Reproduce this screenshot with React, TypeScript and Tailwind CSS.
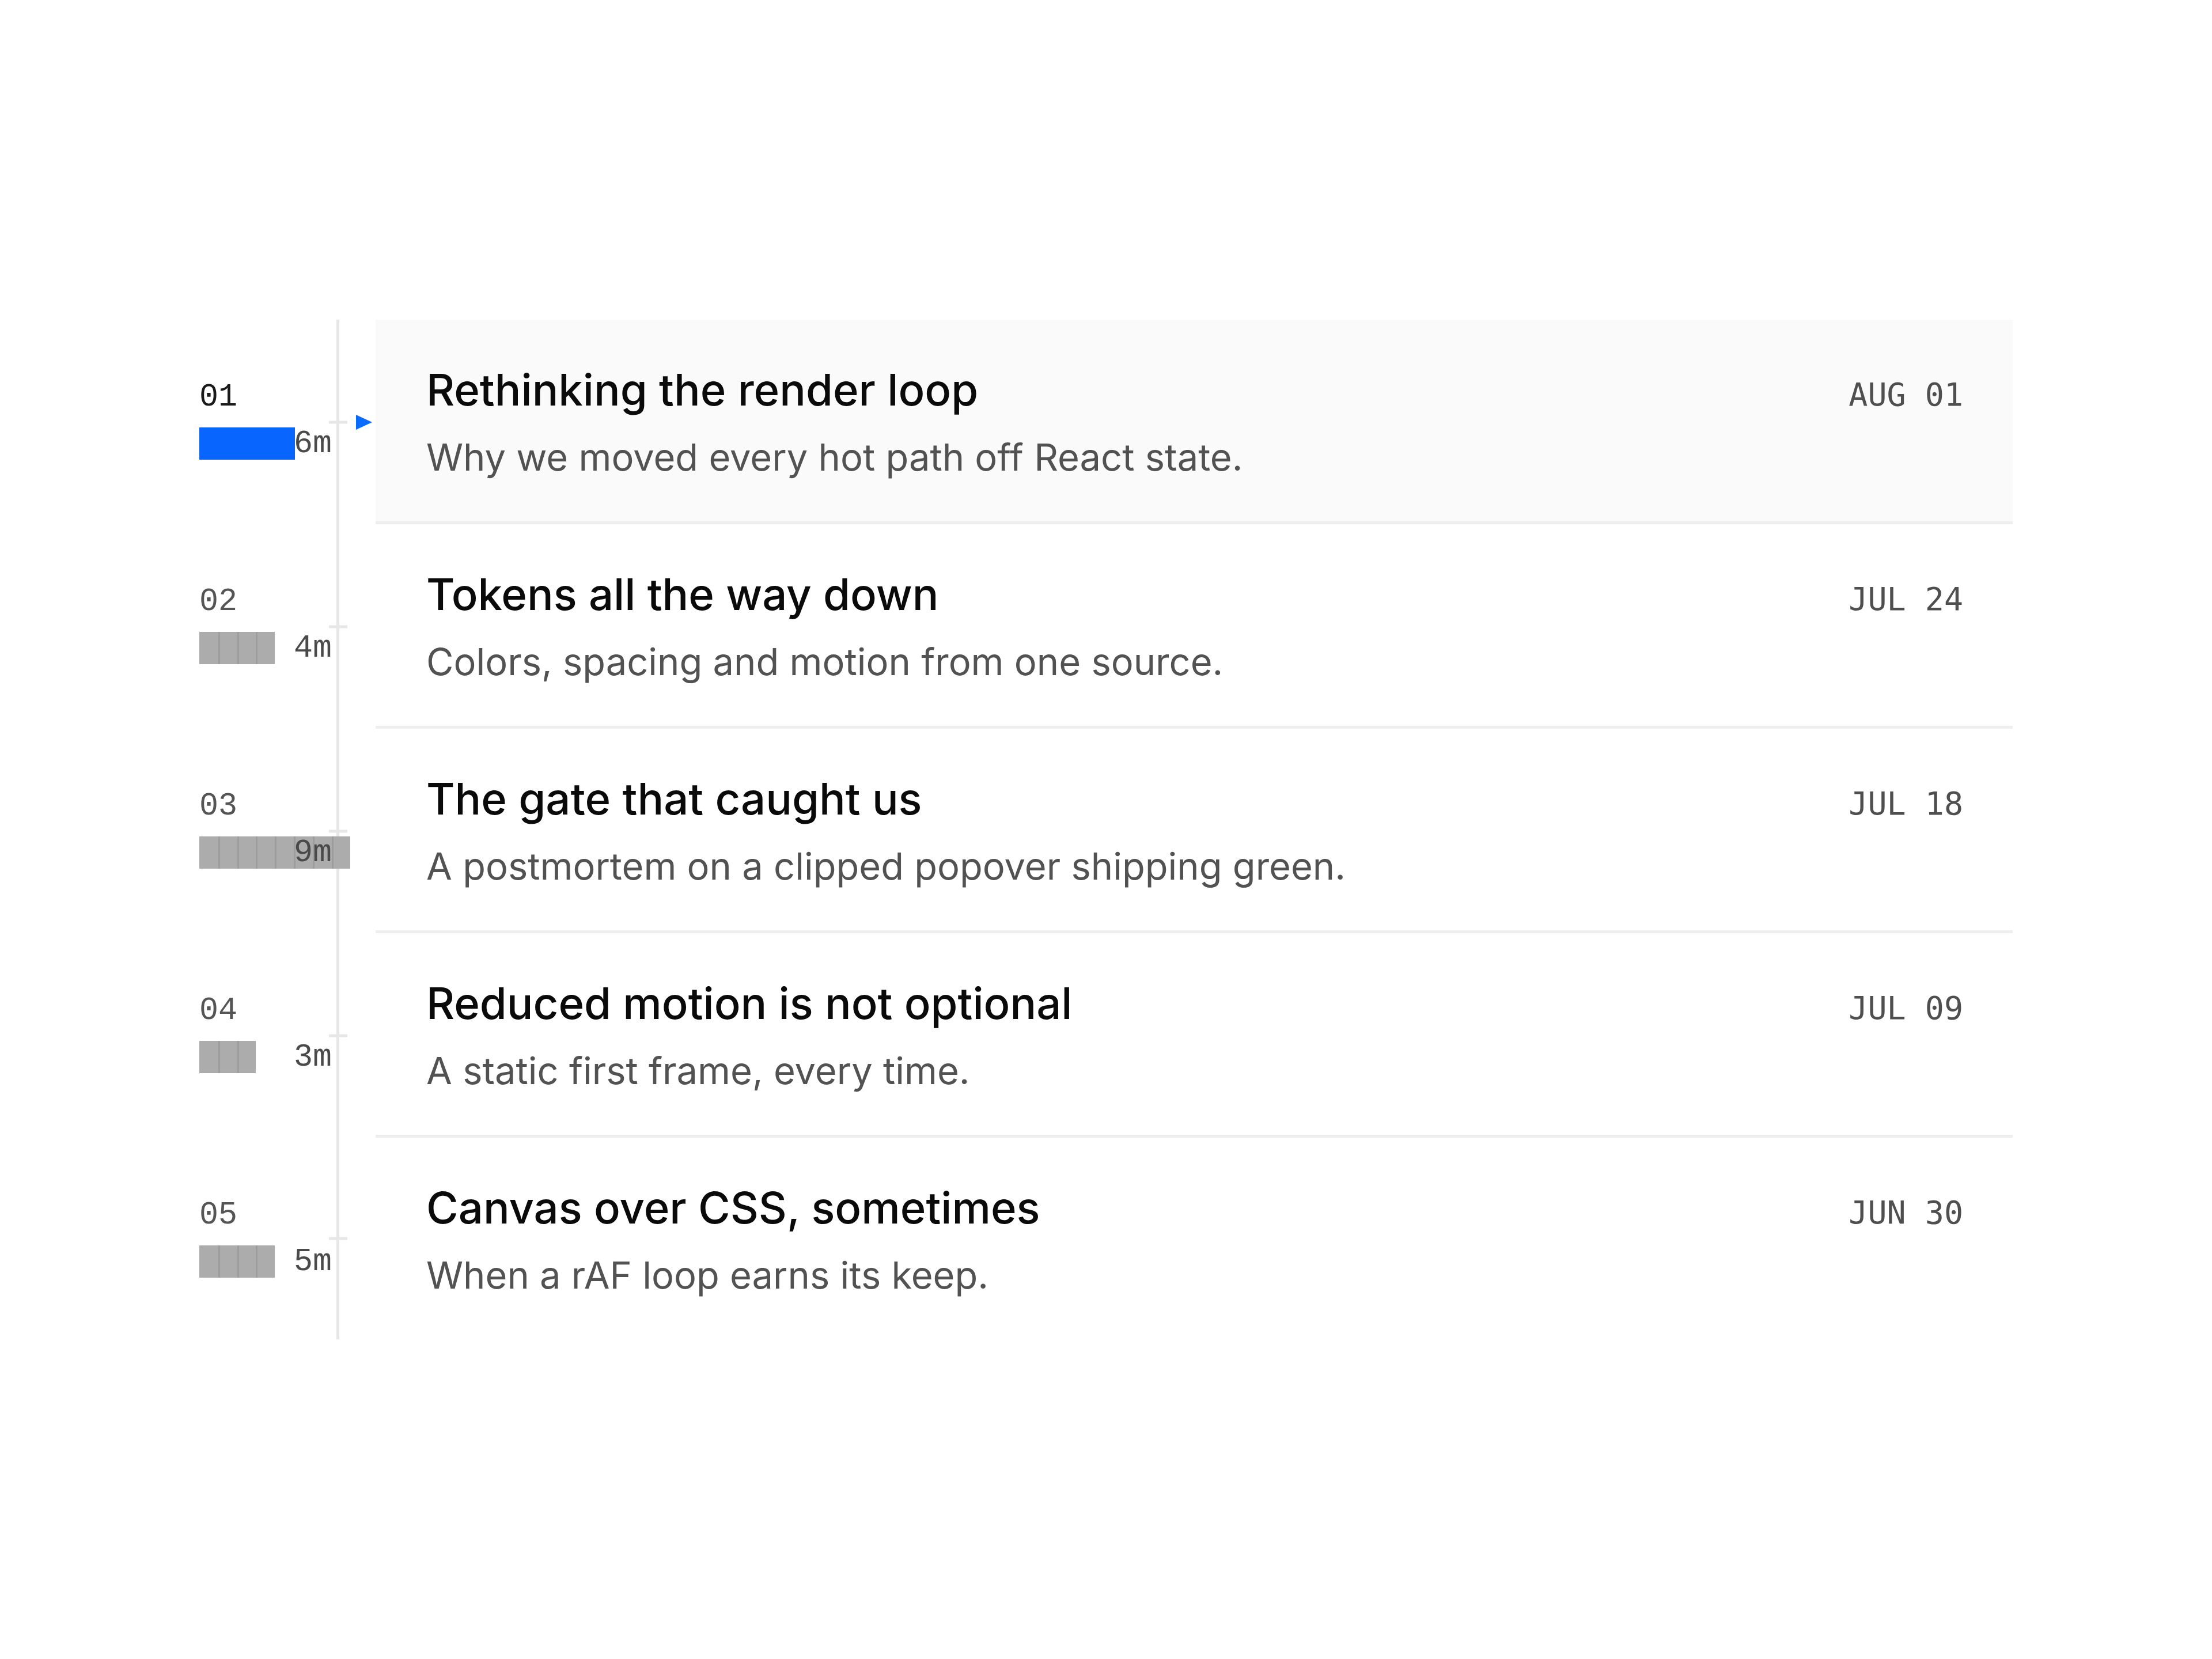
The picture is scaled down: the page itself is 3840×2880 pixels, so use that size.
import React from "react";

type Post = {
  num: string;
  title: string;
  blurb: string;
  date: string;
  minutes: number;
  segments: number;
};

const posts: Post[] = [
  {
    num: "01",
    title: "Rethinking the render loop",
    blurb: "Why we moved every hot path off React state.",
    date: "AUG 01",
    minutes: 6,
    segments: 5,
  },
  {
    num: "02",
    title: "Tokens all the way down",
    blurb: "Colors, spacing and motion from one source.",
    date: "JUL 24",
    minutes: 4,
    segments: 4,
  },
  {
    num: "03",
    title: "The gate that caught us",
    blurb: "A postmortem on a clipped popover shipping green.",
    date: "JUL 18",
    minutes: 9,
    segments: 8,
  },
  {
    num: "04",
    title: "Reduced motion is not optional",
    blurb: "A static first frame, every time.",
    date: "JUL 09",
    minutes: 3,
    segments: 3,
  },
  {
    num: "05",
    title: "Canvas over CSS, sometimes",
    blurb: "When a rAF loop earns its keep.",
    date: "JUN 30",
    minutes: 5,
    segments: 4,
  },
];

const mono = "font-['Liberation_Mono','Courier_New',monospace]";

function ReadBar({ segments, active }: { segments: number; active: boolean }) {
  return (
    <div className="relative z-10 col-start-1 row-start-1 flex h-[56px] self-center justify-self-start">
      {Array.from({ length: segments }).map((_, i) =>
        active ? (
          <span key={i} className="h-full w-[33.2px] bg-[#0866ff]" />
        ) : (
          <span
            key={i}
            className="h-full w-[32.8px] border-l-[3px] border-[#9d9d9d] bg-[#acacac] first:border-l-0"
          />
        )
      )}
    </div>
  );
}

function Gutter({ post, active }: { post: Post; active: boolean }) {
  return (
    <div className="flex w-[306px] shrink-0">
      <div className="flex w-[230px] flex-col pt-[107px]">
        <span
          className={`${mono} text-[55px] leading-[55px] ${
            active ? "text-[#1a1a1a]" : "text-[#555555]"
          }`}
        >
          {post.num}
        </span>
        <div className="mt-[25px] grid h-[56px] grid-cols-[230px]">
          <ReadBar segments={post.segments} active={active} />
          <span
            className={`${mono} relative z-20 col-start-1 row-start-1 self-center justify-self-end text-[55px] leading-[55px] text-[#4a4a4a]`}
          >
            {post.minutes}m
          </span>
        </div>
      </div>
      {/* timeline rail with a tick per row */}
      <div className="relative ml-[8px] w-[5px] bg-[#e7e7e7]">
        <span className="absolute left-1/2 top-1/2 h-[5px] w-[32px] -translate-x-1/2 -translate-y-1/2 bg-[#e7e7e7]" />
      </div>
      <div className="flex w-[63px] items-center pl-[29px]">
        {active && (
          <svg width="28" height="26" viewBox="0 0 28 26">
            <path d="M0 0 L28 13 L0 26 Z" fill="#0a6cff" />
          </svg>
        )}
      </div>
    </div>
  );
}

function Row({ post, index }: { post: Post; index: number }) {
  const active = index === 0;
  const last = index === posts.length - 1;
  return (
    <div className="flex">
      <Gutter post={post} active={active} />
      <div
        className={`flex-1 pl-[88px] pr-[86px] pt-[75px] pb-[71px] ${
          active ? "bg-[#fafafa]" : "bg-white"
        } ${last ? "" : "border-b-[5px] border-[#eeeeee]"}`}
      >
        <div className="flex items-baseline justify-between">
          <h2 className="font-['Inter',sans-serif] text-[76px] font-medium leading-[92px] text-[#0a0a0a]">
            {post.title}
          </h2>
          <span className="font-['DejaVu_Sans_Mono',monospace] text-[55px] leading-[55px] text-[#4f4f4f]">
            {post.date}
          </span>
        </div>
        <p className="mt-[32px] font-['Inter',sans-serif] text-[65px] leading-[80px] text-[#525252]">
          {post.blurb}
        </p>
      </div>
    </div>
  );
}

export default function App() {
  return (
    <div className="flex h-[2880px] w-full items-center justify-center bg-white">
      <div className="flex w-[3148px] flex-col">
        {posts.map((p, i) => (
          <Row key={p.num} post={p} index={i} />
        ))}
      </div>
    </div>
  );
}
